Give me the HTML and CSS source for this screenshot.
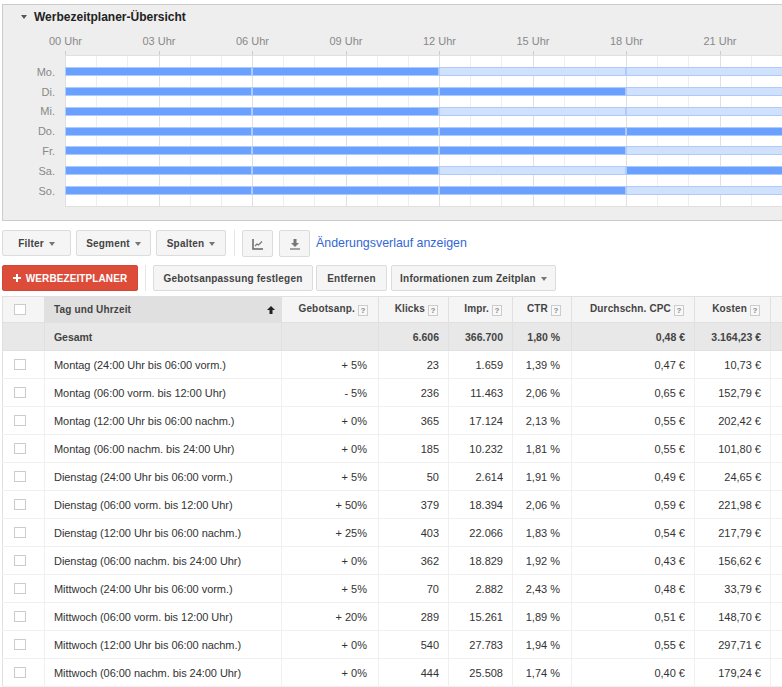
FILE: index.html
```html
<!DOCTYPE html>
<html lang="de">
<head>
<meta charset="utf-8">
<title>Werbezeitplaner</title>
<link rel="stylesheet" href="styles.css">
</head>
<body>
<div class="page">
  <section class="panel">
    <h2 class="panel-title"><span class="caret caret-title"></span>Werbezeitplaner-Übersicht</h2>
    <div class="hours">
      <span>00 Uhr</span><span>03 Uhr</span><span>06 Uhr</span><span>09 Uhr</span><span>12 Uhr</span><span>15 Uhr</span><span>18 Uhr</span><span>21 Uhr</span>
    </div>
    <div class="ticks"></div>
    <div class="chart">
      <div class="days">
        <span>Mo.</span><span>Di.</span><span>Mi.</span><span>Do.</span><span>Fr.</span><span>Sa.</span><span>So.</span>
      </div>
      <div class="plot">
        <div class="bar"><i class="seg on"></i><i class="seg on"></i><i class="seg"></i><i class="seg"></i></div>
        <div class="bar"><i class="seg on"></i><i class="seg on"></i><i class="seg on"></i><i class="seg"></i></div>
        <div class="bar"><i class="seg on"></i><i class="seg on"></i><i class="seg"></i><i class="seg"></i></div>
        <div class="bar"><i class="seg on"></i><i class="seg on"></i><i class="seg on"></i><i class="seg on"></i></div>
        <div class="bar"><i class="seg on"></i><i class="seg on"></i><i class="seg on"></i><i class="seg"></i></div>
        <div class="bar"><i class="seg on"></i><i class="seg on"></i><i class="seg"></i><i class="seg on"></i></div>
        <div class="bar"><i class="seg on"></i><i class="seg on"></i><i class="seg on"></i><i class="seg"></i></div>
      </div>
    </div>
  </section>

  <div class="toolbar toolbar-one">
    <button class="btn btn-filter">Filter<span class="caret"></span></button>
    <button class="btn btn-segment">Segment<span class="caret"></span></button>
    <button class="btn btn-spalten">Spalten<span class="caret"></span></button>
    <span class="sep"></span>
    <button class="btn btn-icon" aria-label="Diagramm">
      <svg width="12" height="12" viewBox="0 0 12 12"><path d="M1 1v10h10" fill="none" stroke="#666" stroke-width="1.5"/><path d="M3 8l2-2 1.5 1L10 3.500" fill="none" stroke="#777" stroke-width="1.2"/></svg>
    </button>
    <button class="btn btn-icon" aria-label="Herunterladen">
      <svg width="12" height="12" viewBox="0 0 12 12"><path d="M4.500 1h3v4H10L6 9 2 5h2.500z" fill="#777"/><path d="M1 11h10" stroke="#777" stroke-width="1.3"/></svg>
    </button>
    <a class="history-link" href="#">Änderungsverlauf anzeigen</a>
  </div>

  <div class="toolbar toolbar-two">
    <button class="btn-red"><svg width="8" height="8" viewBox="0 0 8 8"><path d="M3 0h2v3h3v2H5v3H3V5H0V3h3z" fill="#fff"/></svg>WERBEZEITPLANER</button>
    <span class="sep sep-two"></span>
    <button class="btn btn-bid">Gebotsanpassung festlegen</button>
    <button class="btn btn-remove">Entfernen</button>
    <button class="btn btn-info">Informationen zum Zeitplan<span class="caret"></span></button>
  </div>

  <div class="table-wrap">
    <table class="data">
      <colgroup>
        <col class="c-check"><col class="c-name"><col class="c-bid"><col class="c-clicks"><col class="c-impr"><col class="c-ctr"><col class="c-cpc"><col class="c-cost"><col class="c-rest">
      </colgroup>
      <thead>
        <tr>
          <th class="check"><span class="box"></span></th>
          <th class="name sorted"><div class="sort-head">Tag und Uhrzeit<svg width="8" height="8" viewBox="0 0 8 8"><path d="M4 0l4 4H5.500v4h-3V4H0z" fill="#222"/></svg></div></th>
          <th>Gebotsanp.<span class="help">?</span></th>
          <th>Klicks<span class="help">?</span></th>
          <th>Impr.<span class="help">?</span></th>
          <th>CTR<span class="help">?</span></th>
          <th>Durchschn. CPC<span class="help">?</span></th>
          <th>Kosten<span class="help">?</span></th>
          <th></th>
        </tr>
      </thead>
      <tbody>
        <tr class="total"><td></td><td class="name">Gesamt</td><td></td><td>6.606</td><td>366.700</td><td>1,80 %</td><td>0,48 €</td><td>3.164,23 €</td><td></td></tr>
        <tr><td class="check"><span class="box"></span></td><td class="name">Montag (24:00 Uhr bis 06:00 vorm.)</td><td>+ 5%</td><td>23</td><td>1.659</td><td>1,39 %</td><td>0,47 €</td><td>10,73 €</td><td></td></tr>
        <tr><td class="check"><span class="box"></span></td><td class="name">Montag (06:00 vorm. bis 12:00 Uhr)</td><td>- 5%</td><td>236</td><td>11.463</td><td>2,06 %</td><td>0,65 €</td><td>152,79 €</td><td></td></tr>
        <tr><td class="check"><span class="box"></span></td><td class="name">Montag (12:00 Uhr bis 06:00 nachm.)</td><td>+ 0%</td><td>365</td><td>17.124</td><td>2,13 %</td><td>0,55 €</td><td>202,42 €</td><td></td></tr>
        <tr><td class="check"><span class="box"></span></td><td class="name">Montag (06:00 nachm. bis 24:00 Uhr)</td><td>+ 0%</td><td>185</td><td>10.232</td><td>1,81 %</td><td>0,55 €</td><td>101,80 €</td><td></td></tr>
        <tr><td class="check"><span class="box"></span></td><td class="name">Dienstag (24:00 Uhr bis 06:00 vorm.)</td><td>+ 5%</td><td>50</td><td>2.614</td><td>1,91 %</td><td>0,49 €</td><td>24,65 €</td><td></td></tr>
        <tr><td class="check"><span class="box"></span></td><td class="name">Dienstag (06:00 vorm. bis 12:00 Uhr)</td><td>+ 50%</td><td>379</td><td>18.394</td><td>2,06 %</td><td>0,59 €</td><td>221,98 €</td><td></td></tr>
        <tr><td class="check"><span class="box"></span></td><td class="name">Dienstag (12:00 Uhr bis 06:00 nachm.)</td><td>+ 25%</td><td>403</td><td>22.066</td><td>1,83 %</td><td>0,54 €</td><td>217,79 €</td><td></td></tr>
        <tr><td class="check"><span class="box"></span></td><td class="name">Dienstag (06:00 nachm. bis 24:00 Uhr)</td><td>+ 0%</td><td>362</td><td>18.829</td><td>1,92 %</td><td>0,43 €</td><td>156,62 €</td><td></td></tr>
        <tr><td class="check"><span class="box"></span></td><td class="name">Mittwoch (24:00 Uhr bis 06:00 vorm.)</td><td>+ 5%</td><td>70</td><td>2.882</td><td>2,43 %</td><td>0,48 €</td><td>33,79 €</td><td></td></tr>
        <tr><td class="check"><span class="box"></span></td><td class="name">Mittwoch (06:00 vorm. bis 12:00 Uhr)</td><td>+ 20%</td><td>289</td><td>15.261</td><td>1,89 %</td><td>0,51 €</td><td>148,70 €</td><td></td></tr>
        <tr><td class="check"><span class="box"></span></td><td class="name">Mittwoch (12:00 Uhr bis 06:00 nachm.)</td><td>+ 0%</td><td>540</td><td>27.783</td><td>1,94 %</td><td>0,55 €</td><td>297,71 €</td><td></td></tr>
        <tr><td class="check"><span class="box"></span></td><td class="name">Mittwoch (06:00 nachm. bis 24:00 Uhr)</td><td>+ 0%</td><td>444</td><td>25.508</td><td>1,74 %</td><td>0,40 €</td><td>179,24 €</td><td></td></tr>
      </tbody>
    </table>
  </div>
</div>
</body>
</html>
```
FILE: styles.css
```css
* { box-sizing: border-box; }
html, body { margin: 0; padding: 0; height: 687px; width: 782px; overflow: hidden; background: #fff; }
body { font-family: "Liberation Sans", Arial, sans-serif; font-size: 11px; color: #333; }
.page { padding: 4px 0 0 2px; width: 782px; height: 687px; overflow: hidden; }

.panel { height: 217px; background: #eee; border-top: 1px solid #ccc; border-left: 1px solid #ccc; border-bottom: 1px solid #ccc; overflow: hidden; }
.panel-title { margin: 0; height: 23px; padding-left: 31px; position: relative; font-size: 12px; font-weight: bold; line-height: 24px; color: #222; }
.caret { display: inline-block; width: 0; height: 0; border-left: 3.500px solid transparent; border-right: 3.500px solid transparent; border-top: 4px solid #777; margin-left: 5px; vertical-align: 1px; }
.caret-title { position: absolute; left: 18px; top: 10px; margin: 0; border-top-color: #555; }

.hours { display: flex; width: 748px; margin-left: 15.75px; height: 23px; padding-top: 7px; line-height: 13px; color: #888; }
.hours span { flex: 0 0 93.51px; text-align: center; }

.ticks { height: 4px; margin-left: 62px; width: 748px; background: repeating-linear-gradient(90deg, #ccc 0 1px, transparent 1px 93.51px); }

.chart { display: flex; }
.days { flex: 0 0 62px; display: flex; flex-direction: column; gap: 10.85px; padding: 12.700px 10px 0 0; text-align: right; color: #888; }
.days span { height: 9px; line-height: 9px; }
.plot { flex: 0 0 748px; height: 152px; display: flex; flex-direction: column; gap: 10.85px; padding-top: 11px; background-color: #fff; border-top: 1px solid #e0e0e0; border-bottom: 1px solid #e0e0e0;
  background-image: repeating-linear-gradient(90deg, #e0e0e0 0 1px, transparent 1px 93.51px), repeating-linear-gradient(90deg, #eee 0 1px, transparent 1px 31.17px); }
.bar { display: flex; height: 9px; }
.seg { flex: 0 0 187.02px; border: 1px solid #aecbfc; background: #cfe1fd; }
.seg.on { background: #6aa0ff; }

.toolbar { display: flex; align-items: stretch; }
.toolbar-one { margin-top: 9px; height: 27px; }
.toolbar-two { margin-top: 8px; height: 26px; }

.btn { height: 26px; padding: 0; background: #f5f5f5; border: 1px solid #dcdcdc; border-radius: 2px; font: bold 10px "Liberation Sans", Arial, sans-serif; letter-spacing: 0.2px; color: #444; text-align: center; }
.btn-filter { width: 69px; }
.btn-segment { width: 75px; margin-left: 5px; }
.btn-spalten { width: 70px; margin-left: 5px; }
.sep { width: 1px; height: 26px; background: #e5e5e5; margin: 0 7px 0 8px; }
.btn-icon { width: 31px; height: 27px; margin-right: 6px; display: flex; align-items: center; justify-content: center; }
.history-link { color: #3367d6; font-size: 12.400px; text-decoration: none; line-height: 26px; }

.btn-red { width: 136px; height: 26px; padding: 0; display: flex; align-items: center; justify-content: center; gap: 5px; background: #dd4b39; border: 1px solid #d14836; border-radius: 2px; color: #fff; font: bold 10px "Liberation Sans", Arial, sans-serif; letter-spacing: 0.1px; }
.sep-two { margin: 0 7px; }
.btn-bid { width: 160px; }
.btn-remove { width: 71px; margin-left: 3px; }
.btn-info { width: 165px; margin-left: 4px; }

.table-wrap { margin-top: 5px; width: 780px; overflow: hidden; }
.data { table-layout: fixed; width: 800px; border-collapse: collapse; border-top: 1px solid #e0e0e0; border-left: 1px solid #e0e0e0; }
.c-check { width: 42px; } .c-name { width: 237px; } .c-bid { width: 97px; } .c-clicks { width: 70px; } .c-impr { width: 64px; } .c-ctr { width: 59px; } .c-cpc { width: 123px; } .c-cost { width: 76px; } .c-rest { width: 32px; }
th, td { padding: 0 9px 0 0; text-align: right; border-right: 1px solid #f0f0f0; border-bottom: 1px solid #f0f0f0; white-space: nowrap; overflow: hidden; }
th { height: 26px; padding-right: 10px; background: #f5f5f5; font-size: 10px; letter-spacing: 0.15px; color: #444; border-color: #e0e0e0; }
td { height: 28px; color: #333; }
td:nth-child(3), td:nth-child(6) { padding-right: 11px; }
td.name { text-align: left; padding-left: 9px; letter-spacing: -0.05px; }
th.name { text-align: left; padding: 0 6px 0 9px; }
th.check, td.check { text-align: left; padding: 0 0 0 11px; }
th.sorted { background: #e0e0e0; }
.sort-head { display: flex; justify-content: space-between; align-items: center; }
.total td { background: #e8e8e8; font-weight: bold; font-size: 10.500px; color: #444; border-color: #e0e0e0; }
.box { display: block; width: 12px; height: 11px; background: #fff; border: 1px solid #ccc; }
.help { display: inline-block; width: 10px; height: 11px; margin-left: 3px; border: 1px solid #ccc; background: #f8f8f8; font-size: 8px; line-height: 9px; text-align: center; color: #888; font-weight: bold; letter-spacing: 0; vertical-align: -1px; }
```
